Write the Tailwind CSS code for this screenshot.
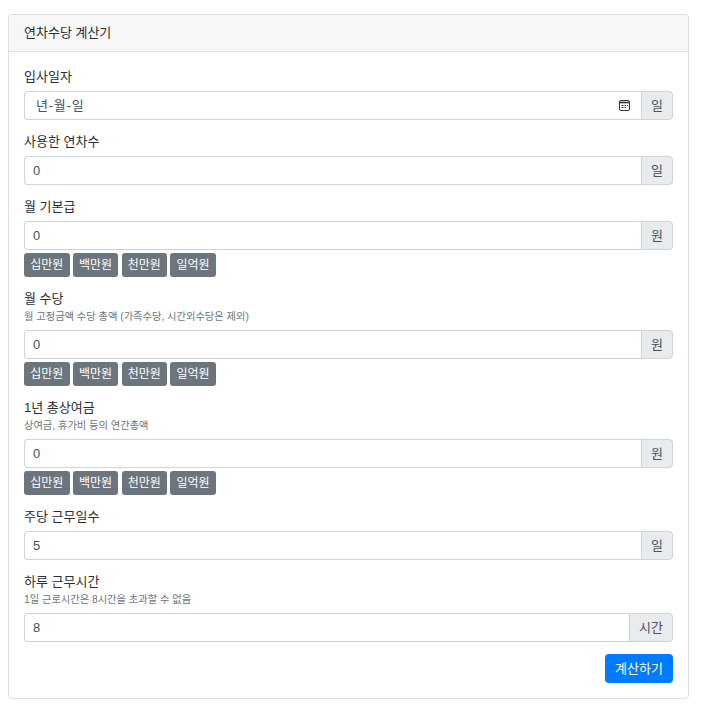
<!DOCTYPE html>
<html lang="ko">
<head>
  <meta charset="UTF-8" />
  <meta name="viewport" content="width=device-width, initial-scale=1.0"/>
  <title>연차수당 계산기</title>
  <script src="https://cdn.jsdelivr.net/npm/@tailwindcss/browser@4"></script>
</head>
<body class="bg-white font-['Liberation_Sans','Noto_Sans_CJK_KR',sans-serif] text-[13px] leading-[19.5px] text-[#2a2e33]">

  <div class="ml-2 mr-[18px] mt-3.5 border border-[#dfdfdf] rounded-[4px]">
    <div class="h-[37px] px-[15px] flex items-center bg-[#f7f7f7] border-b border-[#dfdfdf] rounded-t-[4px]">연차수당 계산기</div>

    <form class="px-[15px] pt-[15px] pb-[15px]">
      <div class="mb-3">
        <label class="block mb-[4.5px]">입사일자</label>
        <div class="flex h-[29px]">
          <div class="flex-1 flex items-center justify-between pl-[11px] pr-[9.5px] border border-r-0 border-[#ced4da] rounded-l-[4px] text-[#495057]">
            <span class="flex gap-[0.75px]"><span>년</span><span>-</span><span>월</span><span>-</span><span>일</span></span>
            <svg class="w-[14px] h-[14px]" viewBox="0 0 14 14" fill="none" stroke="#333" stroke-width="1"><rect x="1.5" y="1.5" width="10" height="10" rx="1.5"/><path d="M1.5 3.5h10" stroke-width="1.6"/><path d="M3.5 6.5h2M6.5 6.5h1.5M9 6.5h1M3.5 8.5h2M6.5 8.5h1.5"/></svg>
          </div>
          <span class="w-8 flex items-center justify-center bg-[#e9ecef] border border-[#ced4da] rounded-r-[4px] text-[#495057]">일</span>
        </div>
      </div>

      <div class="mb-3">
        <label class="block mb-[4.5px]">사용한 연차수</label>
        <div class="flex h-[29px]">
          <input type="text" value="0" class="flex-1 min-w-0 px-2 border border-r-0 border-[#ced4da] rounded-l-[4px] text-[#495057]" />
          <span class="w-8 flex items-center justify-center bg-[#e9ecef] border border-[#ced4da] rounded-r-[4px] text-[#495057]">일</span>
        </div>
      </div>

      <div class="mb-3">
        <label class="block mb-[4.5px]">월 기본급</label>
        <div class="flex h-[29px]">
          <input type="text" value="0" class="flex-1 min-w-0 px-2 border border-r-0 border-[#ced4da] rounded-l-[4px] text-[#495057]" />
          <span class="w-8 flex items-center justify-center bg-[#e9ecef] border border-[#ced4da] rounded-r-[4px] text-[#495057]">원</span>
        </div>
        <div class="flex gap-[3.25px] mt-[3px]">
          <button type="button" class="w-[45.5px] h-6 bg-[#6c757d] text-white text-xs rounded-[3px]">십만원</button>
          <button type="button" class="w-[45.5px] h-6 bg-[#6c757d] text-white text-xs rounded-[3px]">백만원</button>
          <button type="button" class="w-[45.5px] h-6 bg-[#6c757d] text-white text-xs rounded-[3px]">천만원</button>
          <button type="button" class="w-[45.5px] h-6 bg-[#6c757d] text-white text-xs rounded-[3px]">일억원</button>
        </div>
      </div>

      <div class="mb-3">
        <label class="block">월 수당</label>
        <p class="text-[10.25px] leading-4 text-[#6c757d] mb-[5.5px]">월 고정금액 수당 총액 (가족수당, 시간외수당은 제외)</p>
        <div class="flex h-[29px]">
          <input type="text" value="0" class="flex-1 min-w-0 px-2 border border-r-0 border-[#ced4da] rounded-l-[4px] text-[#495057]" />
          <span class="w-8 flex items-center justify-center bg-[#e9ecef] border border-[#ced4da] rounded-r-[4px] text-[#495057]">원</span>
        </div>
        <div class="flex gap-[3.25px] mt-[3px]">
          <button type="button" class="w-[45.5px] h-6 bg-[#6c757d] text-white text-xs rounded-[3px]">십만원</button>
          <button type="button" class="w-[45.5px] h-6 bg-[#6c757d] text-white text-xs rounded-[3px]">백만원</button>
          <button type="button" class="w-[45.5px] h-6 bg-[#6c757d] text-white text-xs rounded-[3px]">천만원</button>
          <button type="button" class="w-[45.5px] h-6 bg-[#6c757d] text-white text-xs rounded-[3px]">일억원</button>
        </div>
      </div>

      <div class="mb-3">
        <label class="block">1년 총상여금</label>
        <p class="text-[10.25px] leading-4 text-[#6c757d] mb-[5.5px]">상여금, 휴가비 등의 연간총액</p>
        <div class="flex h-[29px]">
          <input type="text" value="0" class="flex-1 min-w-0 px-2 border border-r-0 border-[#ced4da] rounded-l-[4px] text-[#495057]" />
          <span class="w-8 flex items-center justify-center bg-[#e9ecef] border border-[#ced4da] rounded-r-[4px] text-[#495057]">원</span>
        </div>
        <div class="flex gap-[3.25px] mt-[3px]">
          <button type="button" class="w-[45.5px] h-6 bg-[#6c757d] text-white text-xs rounded-[3px]">십만원</button>
          <button type="button" class="w-[45.5px] h-6 bg-[#6c757d] text-white text-xs rounded-[3px]">백만원</button>
          <button type="button" class="w-[45.5px] h-6 bg-[#6c757d] text-white text-xs rounded-[3px]">천만원</button>
          <button type="button" class="w-[45.5px] h-6 bg-[#6c757d] text-white text-xs rounded-[3px]">일억원</button>
        </div>
      </div>

      <div class="mb-3">
        <label class="block mb-[4.5px]">주당 근무일수</label>
        <div class="flex h-[29px]">
          <input type="text" value="5" class="flex-1 min-w-0 px-2 border border-r-0 border-[#ced4da] rounded-l-[4px] text-[#495057]" />
          <span class="w-8 flex items-center justify-center bg-[#e9ecef] border border-[#ced4da] rounded-r-[4px] text-[#495057]">일</span>
        </div>
      </div>

      <div class="mb-3">
        <label class="block">하루 근무시간</label>
        <p class="text-[10.25px] leading-4 text-[#6c757d] mb-[5.5px]">1일 근로시간은 8시간을 초과할 수 없음</p>
        <div class="flex h-[29px]">
          <input type="text" value="8" class="flex-1 min-w-0 px-2 border border-r-0 border-[#ced4da] rounded-l-[4px] text-[#495057]" />
          <span class="w-11 flex items-center justify-center bg-[#e9ecef] border border-[#ced4da] rounded-r-[4px] text-[#495057]">시간</span>
        </div>
      </div>

      <div class="flex justify-end">
        <button type="submit" class="w-[68px] h-[29px] bg-[#007bff] text-white rounded-[4px]">계산하기</button>
      </div>
    </form>
  </div>

</body>
</html>
